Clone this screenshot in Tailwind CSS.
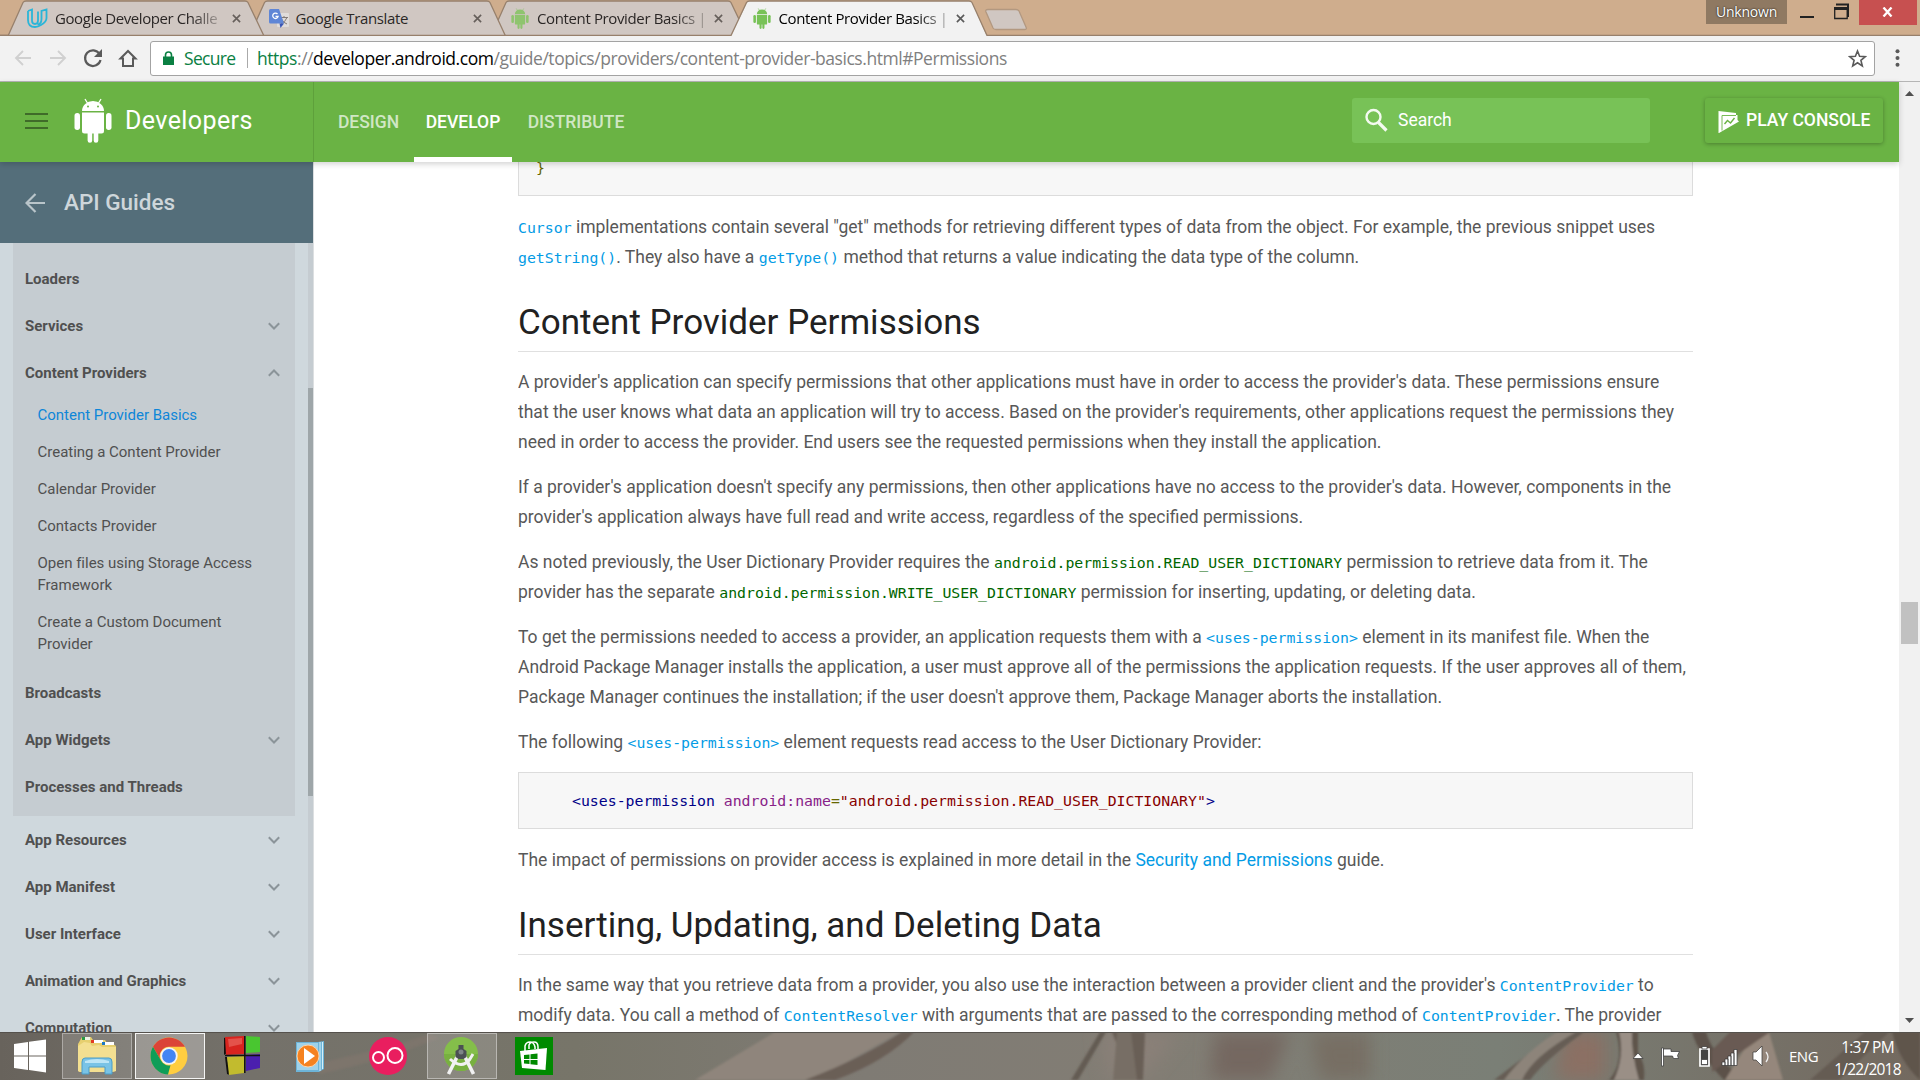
<!DOCTYPE html>
<html lang="en">
<head>
<meta charset="utf-8">
<title>Content Provider Basics | Android Developers</title>
<script src="https://cdn.jsdelivr.net/npm/@tailwindcss/browser@4"></script>
</head>
<body class="w-[1920px] h-[1080px] overflow-hidden flex flex-col bg-white font-['Roboto',sans-serif]">

<svg class="hidden">
  <symbol id="droid" viewBox="0 0 38 45">
    <path d="M8 13a11 10 0 0 1 22 0z"/>
    <path d="M11 1l3 5M27 1l-3 5" stroke="currentColor" stroke-width="1.3"/>
    <path d="M8 14.500h22v18.500a2.500 2.500 0 0 1-2.500 2.500h-3.200v7a2.300 2.300 0 0 1-4.600 0v-7h-1.500v7a2.300 2.300 0 0 1-4.600 0v-7H10.500A2.500 2.500 0 0 1 8 33z"/>
    <rect x="0.500" y="15" width="5.500" height="17" rx="2.700"/><rect x="32" y="15" width="5.500" height="17" rx="2.700"/>
  </symbol>
  <symbol id="down" viewBox="0 0 12 8"><path d="M.8 1.200L6 6.500l5.200-5.300" fill="none" stroke="#8b9499" stroke-width="2"/></symbol>
  <symbol id="x" viewBox="0 0 10 10"><path d="M1 1l8 8M9 1L1 9" stroke="currentColor" stroke-width="1.800"/></symbol>
</svg>

<!-- tab strip -->
<header class="relative h-9 shrink-0 bg-[#cfad8d] font-['Open_Sans',sans-serif]">
  <svg class="absolute inset-0" width="1920" height="36" fill="#d0c7c2" stroke="#97806c" stroke-width="1.300">
    <path d="M0 35.500H1920"/>
    <path d="M491 36L506 2.500Q507 1 509 1H728Q730 1 731 2.500L747 36z"/>
    <path d="M249.500 36L264.500 2.500Q265.500 1 267.500 1H487Q489 1 490 2.500L505.500 36z"/>
    <path d="M8 36L23 2.500Q24 1 26 1H245Q247 1 248 2.500L264 36z"/>
    <path d="M0 35.500H740"/>
    <path fill="#f2f2f2" stroke="none" d="M731 36.500L747 2.500Q748 1 750 1H969Q971 1 972 2.500L987 36.500z"/>
    <path fill="none" d="M731 35.500L746.500 2.500Q747.500 1 749.500 1H969Q971 1 972 2.500L987 35.500"/>
    <path stroke="#b29880" d="M988 9.500H1016Q1018 9.500 1019 11L1026 27Q1027 29.500 1025 29.500H996Q994 29.500 993 28L986 12Q985 9.500 988 9.500z"/>
  </svg>
  <div class="absolute inset-y-0 left-[27px] flex text-[15px] text-[#2b2726] whitespace-nowrap">
    <div class="w-[241.500px] flex items-center">
      <svg width="21" height="21" viewBox="0 0 21 21" fill="none" stroke="#2ab5d8" stroke-width="1.800"><path d="M1 3l4-1.500v11q0 3.500 3 3.500t3-3.500M5 2.500v0M1 3v9q0 7 7 7 3 0 6-2 5.500-3 5.500-7V1.500L14.500 3v8q0 5-4 5.500M11 13V3.500"/></svg>
      <span class="ml-[7px] w-[166px] tracking-[-0.42px] [mask-image:linear-gradient(90deg,#000_82%,#0003)]">Google Developer Challe</span>
      <svg class="ml-[11px] text-[#665f5b]" width="9" height="9"><use href="#x"/></svg>
    </div>
    <div class="w-[241.500px] flex items-center">
      <svg width="20" height="20" viewBox="0 0 20 20"><rect x="8" y="5" width="12" height="14" rx="1" fill="#e0dcda"/><path d="M11 9.500h8M15 8v1.500M18 9.500q-2 5-6 6.500M12.500 11q2 4 5.500 5" stroke="#837b77" fill="none"/><path fill="#5f86d6" d="M1.500 1H10l5 14.500H1.500Q0 15.500 0 14V2.500Q0 1 1.500 1z"/><path d="M10.500 15.500H15L11.500 20z" fill="#3a56b5"/><path d="M8.500 6a2.700 2.700 0 1 0 .6 2.300H6.500" fill="none" stroke="#fff" stroke-width="1.300"/></svg>
      <span class="ml-[7px] w-[166px] tracking-[-0.35px]">Google Translate</span>
      <svg class="ml-[11px] text-[#665f5b]" width="9" height="9"><use href="#x"/></svg>
    </div>
    <div class="w-[241.500px] flex items-center">
      <svg class="text-[#8fc46f]" fill="currentColor" width="20" height="21"><use href="#droid"/></svg>
      <span class="ml-[7px] w-[166px] tracking-[-0.37px] [mask-image:linear-gradient(90deg,#000_82%,#0005)]">Content Provider Basics |</span>
      <svg class="ml-[11px] text-[#665f5b]" width="9" height="9"><use href="#x"/></svg>
    </div>
    <div class="w-[241.500px] flex items-center text-black">
      <svg class="text-[#78c257]" fill="currentColor" width="20" height="21"><use href="#droid"/></svg>
      <span class="ml-[7px] w-[166px] tracking-[-0.37px] [mask-image:linear-gradient(90deg,#000_82%,#0005)]">Content Provider Basics |</span>
      <svg class="ml-[11px] text-[#5a5a5a]" width="9" height="9"><use href="#x"/></svg>
    </div>
  </div>
  <div class="absolute right-[3px] top-0 flex items-start">
    <div class="w-[81px] h-6 bg-[#8f7962] text-white text-[14px] leading-[23px] text-center tracking-[-0.2px] [text-shadow:0_0_2px_#000]">Unknown</div>
    <svg class="ml-[13px] mr-[10px]" width="49" height="24"><path d="M0 16h14v2H0z" fill="#222"/><path d="M36 4.500h12V17" stroke="#222" fill="none" stroke-width="2"/><path d="M34.700 8v10.500h12.500V8z" stroke="#222" fill="none" stroke-width="1.300"/><path d="M34 7h14v3H34z" fill="#222"/></svg>
    <div class="w-[58px] h-[25px] bg-[#c75050] text-white flex items-center justify-center"><svg width="11" height="10" class="-mt-[2px] -ml-[2px]" viewBox="0 0 10 10"><path d="M1 .5l8 9M9 .5l-8 9" stroke="#fff" stroke-width="2.300"/></svg></div>
  </div>
</header>

<!-- toolbar -->
<div class="h-[46px] shrink-0 bg-[#f2f2f2] border-b border-[#b5b5b5] flex items-center pb-[1px] font-['Open_Sans',sans-serif]">
  <svg width="150" height="40" fill="none" stroke="#d0d0d0" stroke-width="1.900">
    <path d="M31 20H16M23 13l-7 7 7 7"/><path d="M50 20h15M58 13l7 7-7 7"/>
    <path stroke="#5a5a5a" stroke-width="2.200" d="M99.500 16A7.800 7.800 0 1 0 100.500 22"/><path d="M102 11v8h-8z" fill="#5a5a5a" stroke="none"/>
    <path stroke="#5a5a5a" stroke-width="2" d="M120.500 20.500L128 13l7.500 7.500H133V28h-10v-7.500z"/>
  </svg>
  <div class="w-[1725px] h-[35px] bg-white border border-[#a3a3a3] rounded-[3px] flex items-center text-[17.500px] whitespace-nowrap">
    <svg class="ml-3" width="11" height="14"><path d="M0 5.500h11V14H0z" fill="#0b8043"/><path d="M2.500 6V4a3 3 0 0 1 6 0v2" fill="none" stroke="#0b8043" stroke-width="1.600"/></svg>
    <span class="ml-[10px] w-[51px] tracking-[-0.7px] text-[#0b8043]">Secure</span>
    <span class="ml-3 w-px h-5 bg-[#aaa]"></span>
    <span class="ml-[9px] tracking-[-0.455px] text-[#808080]"><span class="text-[#0b8043]">https</span>://<span class="text-black">developer.android.com</span>/guide/topics/providers/content-provider-basics.html#Permissions</span>
    <svg class="ml-auto mr-[7px]" width="19" height="19" viewBox="0 0 19 19"><path d="M9.500 2l2.100 5.300 5.700.4-4.400 3.600 1.400 5.600-4.800-3.100-4.800 3.100 1.400-5.600L1.700 7.700l5.700-.4z" fill="none" stroke="#5a5a5a" stroke-width="1.600"/></svg>
  </div>
  <svg class="ml-5" width="5" height="18" fill="#5a5a5a"><circle cx="2.500" cy="2.300" r="2"/><circle cx="2.500" cy="9" r="2"/><circle cx="2.500" cy="15.700" r="2"/></svg>
</div>

<div class="flex h-[950px] shrink-0">
  <div class="w-[1899px] flex flex-col">
    <!-- site header -->
    <nav class="relative z-10 h-20 shrink-0 bg-[#6ab344] flex items-stretch text-white shadow-[0_2px_6px_rgba(0,0,0,0.18)]">
      <div class="w-[314px] border-r border-[#5ea03b] flex items-center pb-[2px]">
        <div class="ml-[25px] w-[23px] flex flex-col gap-[5px]"><i class="h-[2px] bg-[#3f6b29]"></i><i class="h-[2px] bg-[#3f6b29]"></i><i class="h-[2px] bg-[#3f6b29]"></i></div>
        <svg class="ml-[26px] -mt-[2px]" fill="currentColor" width="38" height="45" viewBox="0 0 38 45"><use href="#droid"/><circle cx="14" cy="8.500" r="1" fill="#6ab344"/><circle cx="24" cy="8.500" r="1" fill="#6ab344"/></svg>
        <span class="ml-[13px] text-[25px] tracking-[0.4px]">Developers</span>
      </div>
      <div class="flex text-[17.500px] font-medium text-white/70 leading-[80px]">
        <span class="w-[100px] pl-[9px] text-center">DESIGN</span>
        <span class="w-[98px] text-center text-white border-b-[5px] border-white h-20 leading-[80px]">DEVELOP</span>
        <span class="w-[128px] text-center">DISTRIBUTE</span>
      </div>
      <div class="ml-auto mt-4 w-[298px] h-[45px] rounded-[3px] bg-[#78c257] flex items-center text-[17.500px]">
        <svg class="ml-[13px] mr-[10px] -mt-[2px]" width="23" height="24" fill="none" stroke="#f4faf1"><circle cx="8.500" cy="9" r="7" stroke-width="2.400"/><path d="M13.500 14.500l8 8" stroke-width="3.200"/></svg>Search
      </div>
      <div class="ml-[55px] mr-4 mt-4 w-[178px] h-[45px] rounded-[3px] shadow-[0_1px_4px_rgba(0,0,0,0.3)] flex items-center text-[17.500px] font-medium whitespace-nowrap">
        <svg class="ml-[13px] mr-[7px] mt-[3px]" width="21" height="22"><path d="M.5 0L18 2v2h1.500v5l1.500 1.500L1 22H.5z" fill="#fff"/><path d="M4 19.500V4.500h14" fill="none" stroke="#6ab344" stroke-width=".9"/><path d="M6.500 13l3-3.500 3 2.500 4-5" fill="none" stroke="#6ab344" stroke-width="1.400"/></svg>PLAY CONSOLE
      </div>
    </nav>

    <div class="flex h-[870px]">
      <!-- sidebar -->
      <aside class="w-[314px] shrink-0 border-r border-[#dcdfe1] bg-[#cfd8dd] flex flex-col overflow-hidden">
        <div class="h-[81px] shrink-0 bg-[#546e7a] flex items-center text-[#ced6da] text-[22.500px] font-medium">
          <svg class="ml-[25px] mr-[19px] mt-[1px]" width="20" height="20" fill="none" stroke="#b9c5ca" stroke-width="2.200"><path d="M20 10H2M10.500 1L1.500 10l9 9"/></svg>API Guides
        </div>
        <div class="flex h-[789px]">
          <div class="w-[295px] pl-[13px] text-[15px] font-bold text-[#505050]">
            <div class="bg-[#c5ccd1] pl-3 pt-[13px] h-[573px]">
              <div class="h-[47px] flex items-center">Loaders</div>
              <div class="h-[47px] flex items-center justify-between pr-[15px]">Services<svg class="-mt-[2px]" width="12" height="8"><use href="#down"/></svg></div>
              <div class="h-[47px] flex items-center justify-between pr-[15px]">Content Providers<svg class="rotate-180 -mt-[2px]" width="12" height="8"><use href="#down"/></svg></div>
              <div class="pl-[12.500px] pb-[7px] font-normal leading-[22px] tracking-[-0.01px] -mt-[1px]">
                <div class="py-[7.500px] text-[#0e86d8]">Content Provider Basics</div>
                <div class="py-[7.500px]">Creating a Content Provider</div>
                <div class="py-[7.500px]">Calendar Provider</div>
                <div class="py-[7.500px]">Contacts Provider</div>
                <div class="py-[7.500px]">Open files using Storage Access<br>Framework</div>
                <div class="py-[7.500px]">Create a Custom Document<br>Provider</div>
              </div>
              <div class="h-[47px] flex items-center mt-[1px]">Broadcasts</div>
              <div class="h-[47px] flex items-center justify-between pr-[15px]">App Widgets<svg class="-mt-[2px]" width="12" height="8"><use href="#down"/></svg></div>
              <div class="h-[47px] flex items-center">Processes and Threads</div>
            </div>
            <div class="pl-3 pr-[15px] pt-[1px]">
              <div class="h-[47px] flex items-center justify-between">App Resources<svg class="-mt-[2px]" width="12" height="8"><use href="#down"/></svg></div>
              <div class="h-[47px] flex items-center justify-between">App Manifest<svg class="-mt-[2px]" width="12" height="8"><use href="#down"/></svg></div>
              <div class="h-[47px] flex items-center justify-between">User Interface<svg class="-mt-[2px]" width="12" height="8"><use href="#down"/></svg></div>
              <div class="h-[47px] flex items-center justify-between">Animation and Graphics<svg class="-mt-[2px]" width="12" height="8"><use href="#down"/></svg></div>
              <div class="h-[47px] flex items-center justify-between">Computation<svg class="-mt-[2px]" width="12" height="8"><use href="#down"/></svg></div>
            </div>
          </div>
          <div class="ml-[13px] w-[5px] bg-[#c5ccd1] pt-[145px]"><div class="h-[408px] bg-[#9ea6a9]"></div></div>
        </div>
      </aside>

      <!-- article -->
      <main class="ml-[204px] w-[1175px] h-[870px] overflow-hidden text-[17.500px] leading-[30px] text-[#585858] whitespace-nowrap [&_code]:font-['DejaVu_Sans_Mono',monospace] [&_code]:text-[14.840px] [&_code]:leading-none [&_a]:text-[#039be5] [&>p]:mb-[15px] [&>h2]:text-[35px] [&>h2]:leading-[62px] [&>h2]:text-[#212121] [&>h2]:border-b [&>h2]:border-[#e0e0e0] [&>h2]:mb-[15px] [&>h2]:h-[60px]">
        <div class="flex items-start h-[34px] bg-[#f7f7f7] border border-t-0 border-[#dcdcdc] pl-[17px] text-[#666600]"><code class="-mt-[1px]">}</code></div>
        <p class="mt-4"><a><code>Cursor</code></a> implementations contain several "get" methods for retrieving different types of data from the object. For example, the previous snippet uses<br><a><code>getString()</code></a>. They also have a <a><code>getType()</code></a> method that returns a value indicating the data type of the column.</p>
        <h2 class="mt-[20px]">Content Provider Permissions</h2>
        <p>A provider's application can specify permissions that other applications must have in order to access the provider's data. These permissions ensure<br>that the user knows what data an application will try to access. Based on the provider's requirements, other applications request the permissions they<br>need in order to access the provider. End users see the requested permissions when they install the application.</p>
        <p>If a provider's application doesn't specify any permissions, then other applications have no access to the provider's data. However, components in the<br>provider's application always have full read and write access, regardless of the specified permissions.</p>
        <p>As noted previously, the User Dictionary Provider requires the <code class="text-[#006600]">android.permission.READ_USER_DICTIONARY</code> permission to retrieve data from it. The<br>provider has the separate <code class="text-[#006600]">android.permission.WRITE_USER_DICTIONARY</code> permission for inserting, updating, or deleting data.</p>
        <p>To get the permissions needed to access a provider, an application requests them with a <a><code>&lt;uses-permission&gt;</code></a> element in its manifest file. When the<br>Android Package Manager installs the application, a user must approve all of the permissions the application requests. If the user approves all of them,<br>Package Manager continues the installation; if the user doesn't approve them, Package Manager aborts the installation.</p>
        <p>The following <a><code>&lt;uses-permission&gt;</code></a> element requests read access to the User Dictionary Provider:</p>
        <div class="h-[57px] mb-4 bg-[#f7f7f7] border border-[#dcdcdc] pl-[53px] leading-[55px]"><code class="text-[#000088]">&lt;uses-permission <span class="text-[#882288]">android:name</span><span class="text-[#666600]">=</span><span class="text-[#880000]">"android.permission.READ_USER_DICTIONARY"</span>&gt;</code></div>
        <p>The impact of permissions on provider access is explained in more detail in the <a>Security and Permissions</a> guide.</p>
        <h2 class="mt-[20px]">Inserting, Updating, and Deleting Data</h2>
        <p>In the same way that you retrieve data from a provider, you also use the interaction between a provider client and the provider's <a><code>ContentProvider</code></a> to<br>modify data. You call a method of <a><code>ContentResolver</code></a> with arguments that are passed to the corresponding method of <a><code>ContentProvider</code></a>. The provider</p>
      </main>
    </div>
  </div>
  <!-- page scrollbar -->
  <div class="w-[21px] bg-[#f1f1f1] flex flex-col items-center">
    <svg class="mt-[9px]" width="9" height="5"><path d="M0 5L4.500 0 9 5z" fill="#505050"/></svg>
    <div class="mt-[506px] w-[17px] h-[42px] bg-[#c1c1c1]"></div>
    <svg class="mt-auto mb-[9px]" width="9" height="5"><path d="M0 0h9L4.500 5z" fill="#505050"/></svg>
  </div>
</div>

<!-- taskbar -->
<footer class="relative h-12 shrink-0 bg-[#75736a] font-['Open_Sans',sans-serif] text-white overflow-hidden">
  <svg class="absolute inset-0" width="1920" height="48">
    <defs>
      <linearGradient id="wall"><stop offset="0" stop-color="#68635c"/><stop offset=".13" stop-color="#74716a"/><stop offset=".3" stop-color="#777569"/><stop offset=".45" stop-color="#7f7b74"/><stop offset=".6" stop-color="#827d74"/><stop offset=".78" stop-color="#7a7f76"/><stop offset="1" stop-color="#73695f"/></linearGradient>
      <filter id="soft"><feGaussianBlur stdDeviation="1.200"/></filter>
      <filter id="haze"><feGaussianBlur stdDeviation="9"/></filter>
    </defs>
    <rect width="1920" height="48" fill="url(#wall)"/>
    <g filter="url(#haze)"><path d="M1215 0h75l-20 48h-60z" fill="#746860"/><path d="M1310 0h60v48h-50z" fill="#776e64"/><path d="M1565 0h40v48h-50z" fill="#8b7064"/><path d="M1100 0h80l-40 48h-30z" fill="#8a8078"/></g>
    <g filter="url(#soft)">
      <path d="M300 34Q370 22 430 2L440 6Q380 30 320 42z" fill="#7d756c"/>
      <path d="M775 0H900L815 48H695Z" fill="#8f857c"/><path d="M902 0h12Q885 30 835 48H805Q865 25 902 0z" fill="#6a5e56"/>
      <path d="M1100 0h6L1078 48h-7z" fill="#635b52"/><path d="M1112 0h33l-2 48h-12z" fill="#695f56"/><path d="M1117 0h14l6 48h-24z" fill="#776e65"/>
      <path d="M1560 0h24Q1545 28 1530 48h-36Q1530 20 1560 0z" fill="#665d54"/><path d="M1557 0h19Q1532 25 1522 48h-18Q1525 20 1557 0z" fill="#8d847a"/>
      <path d="M1616 0h22v20q8 12 6 28h-35Q1625 30 1616 0z" fill="#5e544c"/><path d="M1619 0h13q-1 20 7 48h-25Q1625 24 1619 0z" fill="#9a8f86"/>
      <path d="M1692 0h14Q1713 25 1745 48H1724Q1697 20 1692 0z" fill="#5b5149"/><path d="M1725 48L1755 0h14l14 48z" fill="#95877b"/><path d="M1712 40L1770 0h-40L1712 18z" fill="#695a52"/>
      <path d="M1810 48L1865 0h24l-50 48z" fill="#655b53"/><path d="M1892 0h28v48q-20-18-28-48z" fill="#5f544c"/>
    </g>
    <path d="M0 .5H1920" stroke="#55514c"/>
  </svg>
  <div class="relative flex items-center h-12">
    <svg class="ml-[14px]" width="33" height="34" fill="#fff"><path d="M0 5l14-2v13.500H0zM15 2.800L32 .5v16H15zM0 17.500h14V31L0 29zM15 17.500h17V33.500L15 31z"/></svg>
    <div class="ml-[15px] w-[70px] h-[46px] bg-white/15 border border-white/35 flex items-center justify-center">
      <svg class="-mt-[2px]" width="40" height="40" viewBox="0 0 40 40"><path d="M1 36V9l4-7h9l2 3h12l2 3h5l4 3v25l-4 1H3z" fill="#e6cf6f"/><path d="M5 2h8v3H5z" fill="#eef4e6"/><path d="M5 2h3v3H5z" fill="#299a44"/><path d="M14 5h12v3H14z" fill="#fff"/><path d="M14 5h3v3h-3z" fill="#e23b22"/><path d="M25 7h12v3H25z" fill="#fff"/><path d="M25 7h3v3h-3z" fill="#1d78c5"/><path d="M1 11l6-4 6 1 2 3 7-1 3 2h14v24l-4 1H3l-2-1z" fill="#f3df91"/><path d="M5 39V27q0-4 3-4h24q3 0 3 4v12h-7v-7H12v7z" fill="#79c3e6" stroke="#4d9dc7"/><path d="M8 26q12-4 24 0v2H8z" fill="#bce5f6"/></svg>
    </div>
    <div class="ml-[3px] w-[70px] h-[46px] bg-white/30 border border-white/90 flex items-center justify-center">
      <svg class="-ml-[2px]" width="38" height="38" viewBox="0 0 38 38"><circle cx="19" cy="19" r="18.500" fill="#ffcd40"/><path d="M3 9.750A18.500 18.500 0 0 1 35 9.750H19a9.300 9.300 0 0 0-8 14z" fill="#db4437"/><path d="M3 9.750l8.100 14Q15 29.500 20.500 28.300L18 37.500A18.500 18.500 0 0 1 3 9.750z" fill="#0f9d58"/><circle cx="19" cy="19" r="8.700" fill="#f4f4f4"/><circle cx="19" cy="19" r="6.900" fill="#4285f4"/></svg>
    </div>
    <svg class="ml-[19px]" width="38" height="41"><path d="M0 2l3-1v16l-3 2zM1 21l2 0 3 18-3-1z" fill="#111"/><path d="M1 1l19-1v18L2 19z" fill="#d8241f"/><path d="M22 0l14 1v15l-14 1z" fill="#49c630"/><path d="M3 21l17-1v17L5 39z" fill="#c2bb2e"/><path d="M22 19l14-1v14l-14 3z" fill="#4b1fae"/><path d="M4 3l14-1v6L5 11z" fill="#f08078" opacity=".5"/><path d="M1 19.500h35" stroke="#111" stroke-width="1.500"/><path d="M20.800 0v37" stroke="#111" stroke-width="1.500"/></svg>
    <svg class="ml-[34px]" width="34" height="34"><path d="M0 3h22l6-1v28l-5 3H0z" fill="#6db4d8"/><path d="M24 3v29M26.500 3v27" stroke="#d5effa"/><path d="M1 4h21v27H1z" fill="#9fd2ea"/><circle cx="12" cy="17" r="11" fill="#f58220" stroke="#fbd5ae"/><path d="M8 9v16l11-8z" fill="#fff"/></svg>
    <svg class="ml-[39px]" width="38" height="38" fill="none" stroke="#fff" stroke-width="2"><circle cx="19" cy="19" r="19" fill="#e91e5f" stroke="none"/><circle cx="9.500" cy="20.500" r="5.500"/><circle cx="26" cy="18.500" r="7.500"/></svg>
    <div class="ml-5 w-[70px] h-[46px] bg-white/15 border border-white/40 flex items-center justify-center">
      <svg class="-ml-[2px]" width="34" height="40" viewBox="0 0 34 40" fill="none"><circle cx="17" cy="18" r="17" fill="#84be4a"/><path d="M0 18a17 17 0 0 0 34 0z" fill="#78b040"/><path d="M15 17L4.500 38M19 17l10.500 21" stroke="#f1f1f1" stroke-width="3.600"/><path d="M6 23q12 11 20 0l3-5" stroke="#f1f1f1" stroke-width="3"/><path d="M14.500 9h5v4l3 2v6l-3 2h-5l-3-2v-6l3-2z" fill="#4b5053"/><circle cx="17" cy="16" r="2.500" fill="#7e8587"/></svg>
    </div>
    <svg class="ml-[18px]" width="38" height="38"><path d="M0 0h38v38H0z" fill="#008a00"/><path d="M5 14l27-3-1.500 22L7 31z" fill="#fff"/><path d="M10 14V9q1-4 5-4t5 5v2M14 12V8q1-3 5-3t4 5v2" fill="none" stroke="#fff" stroke-width="1.500"/><path d="M9 18l5.500-.5v4.500H9zM15.500 17.300l7-.7V22h-7zM9 23h5.500v4L9 26.500zM15.500 23h7v5l-7-.8z" fill="#008a00"/></svg>
    <div class="ml-auto flex items-center mr-[16px] mt-[1px]">
      <svg width="132" height="26"><g stroke="#333" stroke-width=".7" fill="#fff"><path d="M0 14.500L5 9l5 5.500z"/><path d="M28.500 4h2v18h-2z"/><path d="M30.500 5h7.500v2.500h8.500l-2 4 1 3h-5l-1-2.500h-9z"/><path d="M67 5h9v17h-9z" fill="#444" stroke="#fff" stroke-width="1.700"/><path d="M69 2.500h5V5h-5zM68.500 15.500h6v5h-6z"/><path d="M89 18h3v3.500h-3zM92 15h3v6.500h-3zM95 12h3v9.500h-3zM98 9h3v12.500h-3zM101 5.500h3v16h-3z"/><path d="M120 8h3l6-6v20l-6-6h-3z"/></g></svg>
      <svg class="mr-[18px]" width="6" height="18" fill="none" stroke="#eee" stroke-width="1.300"><path d="M1 4q4 5 0 10"/></svg>
      <span class="text-[15px] tracking-[-0.5px] w-[30px]">ENG</span>
      <div class="ml-[12px] w-[73px] text-center text-[15.500px] leading-[22px] tracking-[-0.750px] whitespace-nowrap mt-[2px]">1:37 PM<br>1/22/2018</div>
    </div>
  </div>
</footer>
</body>
</html>
